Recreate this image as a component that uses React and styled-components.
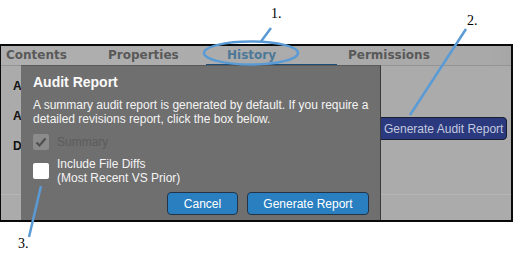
import React from "react";
import styled, { createGlobalStyle } from "styled-components";

const Global = createGlobalStyle`
  html, body { margin: 0; padding: 0; background: #fff; }
  body { font-family: "Liberation Sans", Arial, sans-serif; }
`;

const Page = styled.div`
  position: relative;
  width: 514px;
  height: 262px;
  padding-top: 44px;
  box-sizing: border-box;
  overflow: hidden;
`;

const Frame = styled.div`
  width: 513px;
  height: 178px;
  box-sizing: border-box;
  border-style: solid;
  border-color: #0a0a0a;
  border-width: 2px 2px 2px 1px;
  background: #ababab;
  display: flex;
  flex-direction: column;
`;

const TabBar = styled.div`
  height: 20px;
  box-sizing: border-box;
  display: flex;
  align-items: stretch;
  border-bottom: 1px solid #949494;
  background: linear-gradient(90deg, #afafaf 0%, #ababab 60%, #a9a9a9 96%, #a6a6a6 100%);
`;

const Tab = styled.div`
  width: ${(p) => p.$w}px;
  padding-left: ${(p) => p.$pad}px;
  box-sizing: border-box;
  font-family: "DejaVu Sans", Verdana, sans-serif;
  font-weight: bold;
  font-size: 12px;
  line-height: 18px;
  color: ${(p) => (p.$active ? "#4d7898" : "#595959")};
  border-bottom: 2px solid ${(p) => (p.$active ? "#1d4f79" : "transparent")};
  margin-bottom: -1px;
  white-space: nowrap;
`;

const Body = styled.div`
  position: relative;
  flex: 1;
  display: flex;
  flex-direction: column;
`;

const Content = styled.div`
  height: 128px;
  display: flex;
  justify-content: space-between;
`;

const RowList = styled.div`
  width: 20px;
  overflow: hidden;
  padding: 13px 0 0 12px;
  box-sizing: border-box;
  display: flex;
  flex-direction: column;
  gap: 16px;
`;

const RowLabel = styled.div`
  font-size: 12px;
  font-weight: bold;
  line-height: 14px;
  color: #111;
  white-space: nowrap;
`;

const ActionColumn = styled.div`
  width: 134px;
  padding-top: 51px;
  box-sizing: border-box;
`;

const AuditButton = styled.button`
  width: 130px;
  height: 23px;
  padding: 0 0 0 6px;
  text-align: left;
  background: #2b3a7e;
  color: #c3c8de;
  border: 1px solid #1a1d33;
  border-radius: 4px;
  font-family: "Liberation Sans", Arial, sans-serif;
  font-size: 12px;
  white-space: nowrap;
`;

const Footer = styled.div`
  flex: 1;
  border-top: 1px solid #b6b6b6;
`;

const Dialog = styled.div`
  position: absolute;
  top: -1px;
  left: 20px;
  bottom: 0;
  width: 360px;
  box-sizing: border-box;
  background: #6f6f6f;
  border-top: 1px solid #5a5a5a;
  border-right: 1px solid #3a3a3a;
  padding: 8px 11px 0 12px;
  display: flex;
  flex-direction: column;
  color: #f4f4f4;
`;

const Title = styled.div`
  font-size: 14px;
  font-weight: bold;
  line-height: 16px;
  color: #fafafa;
`;

const Text = styled.p`
  margin: 8px 0 0;
  font-size: 12px;
  line-height: 14px;
  white-space: nowrap;
`;

const CheckRow = styled.div`
  display: flex;
  align-items: ${(p) => (p.$top ? "flex-start" : "center")};
  gap: 8px;
  margin-top: ${(p) => p.$mt}px;
`;

const Box = styled.span`
  width: 16px;
  height: 16px;
  flex: none;
  box-sizing: border-box;
  border-radius: 2px;
  background: ${(p) => (p.$disabled ? "#8b8b8b" : "#ffffff")};
  margin-top: ${(p) => p.$mt || 0}px;
  display: flex;
  align-items: center;
  justify-content: center;
`;

const CheckLabel = styled.span`
  font-size: 12px;
  line-height: 14px;
  color: ${(p) => (p.$disabled ? "#5c5c5c" : "#f4f4f4")};
`;

const ButtonRow = styled.div`
  margin-top: 7px;
  display: flex;
  justify-content: flex-end;
  gap: 9px;
`;

const DialogButton = styled.button`
  width: ${(p) => p.$w}px;
  height: 23px;
  padding: 0;
  background: #2a7fc1;
  color: #ffffff;
  border: 1px solid #233447;
  border-radius: 4px;
  font-family: "Liberation Sans", Arial, sans-serif;
  font-size: 12px;
`;

const Callouts = styled.svg`
  position: absolute;
  left: 0;
  top: 0;
  pointer-events: none;
`;

const Marker = styled.span`
  position: absolute;
  left: ${(p) => p.$x}px;
  top: ${(p) => p.$y}px;
  font-family: "Liberation Serif", "Times New Roman", serif;
  font-size: 14px;
  line-height: 16px;
  color: #000;
`;

export default function App() {
  return (
    <>
      <Global />
      <Page>
        <Frame>
          <TabBar>
            <Tab $w={100} $pad={5}>Contents</Tab>
            <Tab $w={105} $pad={7}>Properties</Tab>
            <Tab $w={131} $pad={21} $active>History</Tab>
            <Tab $w={160} $pad={11}>Permissions</Tab>
          </TabBar>
          <Body>
            <Content>
              <RowList>
                <RowLabel>A</RowLabel>
                <RowLabel>A</RowLabel>
                <RowLabel>D</RowLabel>
              </RowList>
              <ActionColumn>
                <AuditButton>Generate Audit Report</AuditButton>
              </ActionColumn>
            </Content>
            <Footer />
            <Dialog>
              <Title>Audit Report</Title>
              <Text>
                A summary audit report is generated by default. If you require a
                <br />
                detailed revisions report, click the box below.
              </Text>
              <CheckRow $mt={8}>
                <Box $disabled>
                  <svg width="12" height="12" viewBox="0 0 12 12">
                    <polyline points="1.5,6.5 4.5,9.5 10.5,2.5" fill="none" stroke="#4f4f4f" strokeWidth="2.2" />
                  </svg>
                </Box>
                <CheckLabel $disabled>Summary</CheckLabel>
              </CheckRow>
              <CheckRow $mt={7} $top>
                <Box $mt={6} />
                <CheckLabel>
                  Include File Diffs
                  <br />
                  (Most Recent VS Prior)
                </CheckLabel>
              </CheckRow>
              <ButtonRow>
                <DialogButton $w={71}>Cancel</DialogButton>
                <DialogButton $w={122}>Generate Report</DialogButton>
              </ButtonRow>
            </Dialog>
          </Body>
        </Frame>
        <Callouts width="514" height="262" viewBox="0 0 514 262">
          <ellipse cx="251" cy="53" rx="47" ry="11.5" fill="none" stroke="#5b9bd5" strokeWidth="2.5" />
          <line x1="261" y1="41.5" x2="271" y2="28" stroke="#5b9bd5" strokeWidth="2.5" />
          <line x1="466" y1="29" x2="410" y2="115" stroke="#5b9bd5" strokeWidth="2.5" />
          <line x1="41" y1="186" x2="29" y2="237" stroke="#5b9bd5" strokeWidth="2.5" />
        </Callouts>
        <Marker $x={271} $y={6}>1.</Marker>
        <Marker $x={467} $y={13}>2.</Marker>
        <Marker $x={18} $y={236}>3.</Marker>
      </Page>
    </>
  );
}
